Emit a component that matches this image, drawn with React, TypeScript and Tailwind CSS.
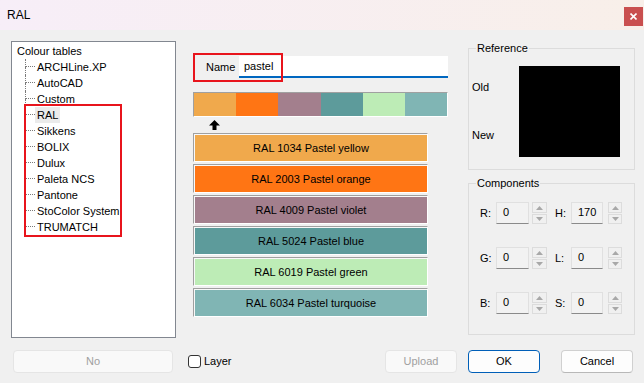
import React from "react";

const tables = [
  "ARCHLine.XP",
  "AutoCAD",
  "Custom",
  "RAL",
  "Sikkens",
  "BOLIX",
  "Dulux",
  "Paleta NCS",
  "Pantone",
  "StoColor System",
  "TRUMATCH",
];

const swatches = [
  { name: "RAL 1034 Pastel yellow", color: "#f0a94c" },
  { name: "RAL 2003 Pastel orange", color: "#ff7514" },
  { name: "RAL 4009 Pastel violet", color: "#a37f8d" },
  { name: "RAL 5024 Pastel blue", color: "#5d9b9b" },
  { name: "RAL 6019 Pastel green", color: "#bdecb6" },
  { name: "RAL 6034 Pastel turquoise", color: "#80b5b4" },
];

function Spinner() {
  return (
    <div className="flex flex-col gap-px h-[22px]">
      <div className="h-[11px] border border-[#dcdcdc] bg-[#f0f0f0] flex items-center justify-center">
        <svg width="7" height="4" viewBox="0 0 7 4">
          <polygon points="3.5,0 7,4 0,4" fill="#a8a8a8" />
        </svg>
      </div>
      <div className="h-[10px] border border-[#dcdcdc] bg-[#f0f0f0] flex items-center justify-center">
        <svg width="7" height="4" viewBox="0 0 7 4">
          <polygon points="0,0 7,0 3.5,4" fill="#a8a8a8" />
        </svg>
      </div>
    </div>
  );
}

function NumField({ value, w }: { value: string; w: string }) {
  return (
    <div
      className={`${w} h-[22px] border border-[#e0e0e0] border-b-[#8a8a8a] bg-[#f2f2f2] pl-[6px] pt-[3px] leading-[13px]`}
    >
      {value}
    </div>
  );
}

function CompRow({ a, av, b, bv }: { a: string; av: string; b: string; bv: string }) {
  return (
    <div className="flex items-center h-[22px] pl-[11px]">
      <span className="w-[16px]">{a}</span>
      <NumField value={av} w="w-[33px]" />
      <div className="ml-[3px] w-[15px]">
        <Spinner />
      </div>
      <span className="ml-[8px] w-[16px]">{b}</span>
      <NumField value={bv} w="w-[32px]" />
      <div className="ml-[5px] w-[14px]">
        <Spinner />
      </div>
    </div>
  );
}

export default function App() {
  return (
    <div className="w-[644px] h-[383px] bg-[#f0f0f0] flex flex-col overflow-hidden text-[11px] text-black font-['Liberation_Sans',Arial,sans-serif]">
      {/* title bar */}
      <div className="h-[30px] flex items-start bg-linear-to-r from-[#f7eef8] to-[#f8efe9]">
        <span className="ml-[7px] mt-[8px] text-[12px] leading-[14px]">RAL</span>
        <div className="ml-auto mr-px mt-[7px] w-[19px] h-[19px] bg-[#c94f4f] flex items-center justify-center">
          <svg width="7" height="7" viewBox="0 0 7 7">
            <path d="M0.5 0.5 L6.5 6.5 M6.5 0.5 L0.5 6.5" stroke="#fff" strokeWidth="1.6" />
          </svg>
        </div>
      </div>

      <div className="flex pt-[11px]">
        {/* tree */}
        <div className="ml-[11px] w-[165px] h-[297px] border border-[#828790] bg-white relative">
          <div className="pl-[5px] pt-px">
            <div className="h-[16px] leading-[16px]">Colour tables</div>
            <div className="ml-[8px]">
              {tables.map((t, i) => (
                <div key={t} className="flex h-[16px]">
                  <div className="w-[10px] flex flex-col">
                    <div className="h-[8px] border-l border-b border-dotted border-[#7a7a7a]" />
                    {i < tables.length - 1 && (
                      <div className="flex-1 border-l border-dotted border-[#7a7a7a]" />
                    )}
                  </div>
                  <span
                    className={`leading-[16px] px-[2px] ${t === "RAL" ? "bg-[#ebebeb]" : ""}`}
                  >
                    {t}
                  </span>
                </div>
              ))}
            </div>
          </div>
          <div className="absolute left-[12px] top-[62px] w-[98px] h-[133px] border-2 border-[#e8141c]" />
        </div>

        {/* middle column */}
        <div className="ml-[17px] w-[255px] flex flex-col">
          <div className="relative mt-[15px] h-[22px] flex items-center">
            <span className="w-[46px] pl-[13px]">Name</span>
            <div className="w-[209px] h-[22px] bg-white border-b-2 border-[#0067c0] pl-[5px] leading-[20px]">
              pastel
            </div>
            <div className="absolute left-0 top-[-3px] w-[90px] h-[29px] border-2 border-[#e8141c]" />
          </div>

          <div className="mt-[14px] h-[25px] flex border border-[#a0a0a0] border-r-white border-b-white">
            {swatches.map((s) => (
              <div key={s.color} className="flex-1" style={{ background: s.color }} />
            ))}
          </div>

          <div className="h-[16px] pl-[16px] flex items-center">
            <svg width="11" height="10" viewBox="0 0 11 10">
              <polygon points="5.5,0 11,5.5 7.5,5.5 7.5,10 3.5,10 3.5,5.5 0,5.5" fill="#000" />
            </svg>
          </div>

          <div className="flex flex-col gap-[2px] w-[235px]">
            {swatches.map((s) => (
              <div
                key={s.name}
                className="h-[29px] border border-[#a0a0a0] border-r-white border-b-white"
              >
                <div className="h-full border-t border-l border-[#f8f8f8]">
                  <div
                    className="h-full flex items-center justify-center"
                    style={{ background: s.color }}
                  >
                    {s.name}
                  </div>
                </div>
              </div>
            ))}
          </div>
        </div>

        {/* right column */}
        <div className="ml-[20px] w-[167px] flex flex-col">
          <fieldset className="h-[129px] border border-[#dcdcdc]">
            <legend className="ml-[7px] px-px leading-[14px]">Reference</legend>
            <div className="flex pl-[3px] mt-[11px]">
              <div className="w-[47px] h-[91px] flex flex-col justify-between pt-[15px] pb-[15px] leading-[13px]">
                <span>Old</span>
                <span>New</span>
              </div>
              <div className="w-[101px] h-[91px] bg-black" />
            </div>
          </fieldset>

          <fieldset className="mt-[6px] h-[159px] border border-[#dcdcdc]">
            <legend className="ml-[7px] px-px leading-[14px]">Components</legend>
            <div className="flex flex-col gap-[23px] mt-[12px]">
              <CompRow a="R:" av="0" b="H:" bv="170" />
              <CompRow a="G:" av="0" b="L:" bv="0" />
              <CompRow a="B:" av="0" b="S:" bv="0" />
            </div>
          </fieldset>
        </div>
      </div>

      {/* bottom buttons */}
      <div className="mt-[12px] h-[23px] flex items-center pr-[11px]">
        <div className="ml-[13px] w-[160px] h-full rounded-[4px] border border-[#e5e5e5] bg-[#f9f9f9] text-[#a0a0a0] flex items-center justify-center">
          No
        </div>
        <div className="ml-[15px] w-[13px] h-[13px] rounded-[3px] border border-[#333] bg-white" />
        <span className="ml-[3px]">Layer</span>
        <div className="ml-auto w-[72px] h-full rounded-[4px] border border-[#e5e5e5] bg-[#f9f9f9] text-[#a0a0a0] flex items-center justify-center">
          Upload
        </div>
        <div className="ml-[11px] w-[72px] h-full rounded-[4px] border border-[#005fb8] bg-[#fdfdfd] flex items-center justify-center">
          OK
        </div>
        <div className="ml-[21px] w-[72px] h-full rounded-[4px] border border-[#d0d0d0] border-b-[#b8b8b8] bg-[#fdfdfd] flex items-center justify-center">
          Cancel
        </div>
      </div>
    </div>
  );
}
